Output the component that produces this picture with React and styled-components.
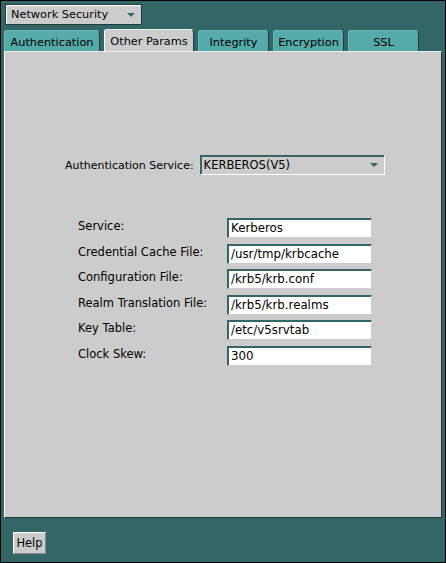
import { Fragment } from 'react';
import styled, { createGlobalStyle } from 'styled-components';

const GlobalStyle = createGlobalStyle`
  html, body {
    margin: 0;
    padding: 0;
    background: #336666;
  }
  body {
    font-family: "DejaVu Sans", "Liberation Sans", sans-serif;
    font-size: 11px;
    color: #000;
  }
`;

const Window = styled.div`
  width: 446px;
  height: 563px;
  box-sizing: border-box;
  border: 1px solid #000;
  background: #336666;
  display: flex;
  flex-direction: column;
  padding: 3px 4px 8px 3px;
`;

const TopCombo = styled.div`
  width: 137px;
  height: 21px;
  box-sizing: border-box;
  border: 1px solid #1e3c3c;
  box-shadow: inset 1px 1px 0 #fff;
  background: #cccccc;
  display: flex;
  align-items: center;
  padding: 0 6px 0 5px;
  margin-left: 1px;
  font-size: 11.3px;
`;

const ComboText = styled.span`
  flex: 1;
`;

const Arrow = styled.span`
  width: 0;
  height: 0;
  border-left: 4px solid transparent;
  border-right: 4px solid transparent;
  border-top: 4px solid #336666;
`;

const TabRow = styled.div`
  display: flex;
  gap: 4px;
  margin-top: 4px;
  height: 22px;
  align-items: flex-end;
`;

const Tab = styled.div`
  width: ${(p) => p.w}px;
  height: ${(p) => (p.active ? 23 : 21)}px;
  box-sizing: border-box;
  border-radius: 3px 4px 0 0;
  background: ${(p) => (p.active ? '#cccccc' : '#55aaaa')};
  border-top: 1px solid ${(p) => (p.active ? '#eeeeee' : '#66bbbb')};
  border-left: 1px solid ${(p) => (p.active ? '#ffffff' : '#66bbbb')};
  border-right: 1px solid #1e3c3c;
  display: flex;
  align-items: center;
  justify-content: center;
  font-size: 11.3px;
  padding-top: ${(p) => (p.active ? 0 : 2)}px;
  margin-bottom: ${(p) => (p.active ? -1 : 0)}px;
`;

const Panel = styled.div`
  flex: 1;
  background: #cccccc;
  border-top: 1px solid #eeeeee;
  border-left: 1px solid #ffffff;
  border-right: 1px solid #1e3c3c;
  border-bottom: 1px solid #1e3c3c;
  margin-right: -1px;
  display: flex;
  flex-direction: column;
  padding-top: 103px;
`;

const ServiceRow = styled.div`
  display: flex;
  align-items: center;
  padding-left: 60px;
  gap: 6px;
`;

const ServiceCombo = styled.div`
  width: 185px;
  height: 20px;
  box-sizing: border-box;
  border: 1px solid #336666;
  border-right-color: #ffffff;
  border-bottom-color: #ffffff;
  box-shadow: inset 1px 1px 0 #336666;
  background: #cccccc;
  display: flex;
  align-items: center;
  padding: 0 6px 0 3px;
  font-size: 11.5px;
`;

const Fields = styled.div`
  display: grid;
  grid-template-columns: 149px 145px;
  row-gap: 5.6px;
  margin-top: 43px;
  padding-left: 73px;
`;

const Label = styled.div`
  height: 20px;
  display: flex;
  align-items: center;
  padding-bottom: 4px;
  box-sizing: border-box;
  font-size: 11.5px;
`;

const Input = styled.div`
  height: 20px;
  box-sizing: border-box;
  background: #ffffff;
  border: 1px solid #336666;
  border-right-color: #cccccc;
  border-bottom-color: #cccccc;
  box-shadow: inset 1px 1px 0 #336666;
  display: flex;
  align-items: center;
  padding: 0 3px;
  font-size: 11.8px;
`;

const Footer = styled.div`
  display: flex;
  padding: 14px 0 0 9px;
`;

const Button = styled.div`
  width: 33px;
  height: 22px;
  box-sizing: border-box;
  background: #cccccc;
  border: 1px solid #ffffff;
  border-right-color: #888888;
  border-bottom-color: #888888;
  display: flex;
  align-items: center;
  justify-content: center;
  font-size: 11.5px;
`;

const tabs = [
  ['Authentication', 96],
  ['Other Params', 90],
  ['Integrity', 71],
  ['Encryption', 71],
  ['SSL', 71],
];

const fields = [
  ['Service:', 'Kerberos'],
  ['Credential Cache File:', '/usr/tmp/krbcache'],
  ['Configuration File:', '/krb5/krb.conf'],
  ['Realm Translation File:', '/krb5/krb.realms'],
  ['Key Table:', '/etc/v5srvtab'],
  ['Clock Skew:', '300'],
];

export default function App() {
  return (
    <>
      <GlobalStyle />
      <Window>
        <TopCombo>
          <ComboText>Network Security</ComboText>
          <Arrow />
        </TopCombo>
        <TabRow>
          {tabs.map(([name, w]) => (
            <Tab key={name} w={w} active={name === 'Other Params'}>
              {name}
            </Tab>
          ))}
        </TabRow>
        <Panel>
          <ServiceRow>
            <span>Authentication Service:</span>
            <ServiceCombo>
              <ComboText>KERBEROS(V5)</ComboText>
              <Arrow />
            </ServiceCombo>
          </ServiceRow>
          <Fields>
            {fields.map(([label, value]) => (
              <Fragment key={label}>
                <Label>{label}</Label>
                <Input>{value}</Input>
              </Fragment>
            ))}
          </Fields>
        </Panel>
        <Footer>
          <Button>Help</Button>
        </Footer>
      </Window>
    </>
  );
}
